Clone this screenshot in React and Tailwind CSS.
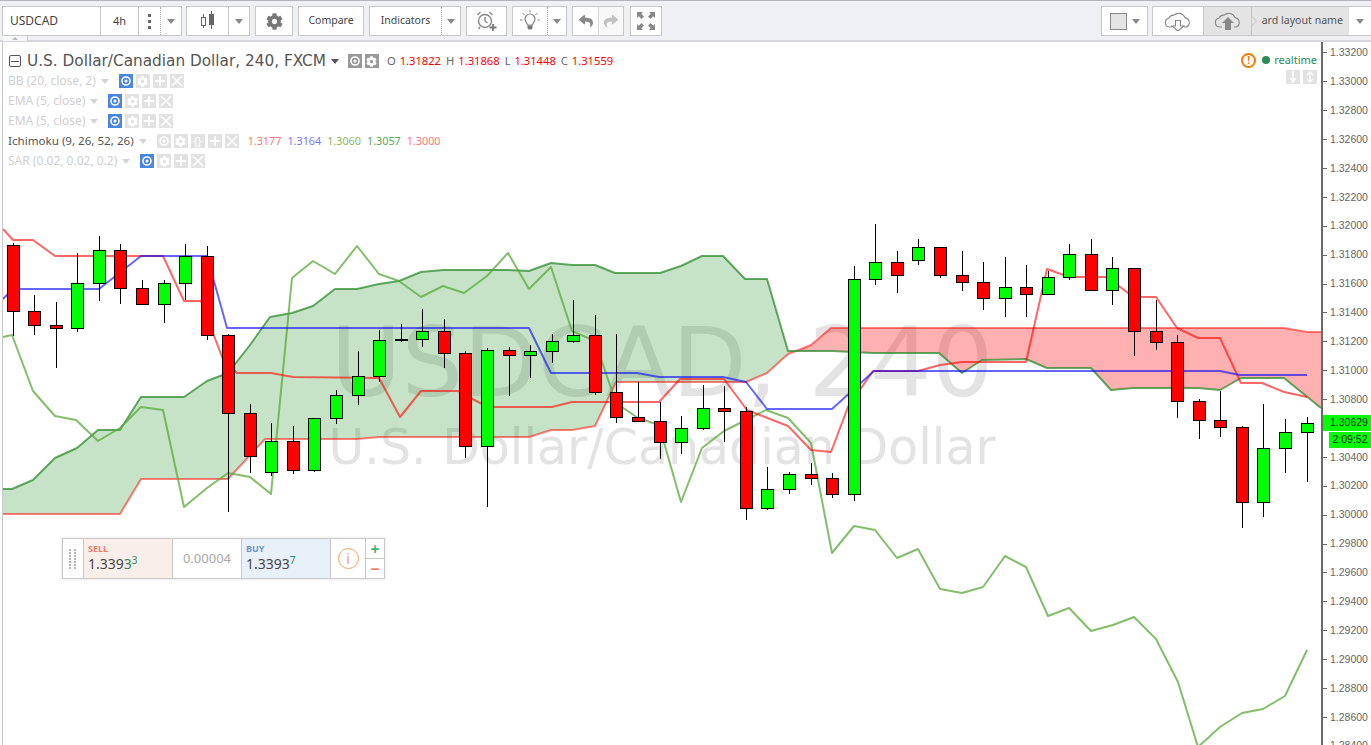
import { FaCog, FaReply, FaShare } from 'react-icons/fa'

// [x, wickTop, bodyTop, bodyBottom, wickBottom, colour]
const R = '#ff0000'
const G = '#00ff00'
const candles = [
  [13, 243, 245, 311, 335, R], [34, 295, 311, 325, 334, R], [56, 302, 325, 328, 367, R],
  [77, 253, 283, 328, 331, G], [99, 236, 250, 283, 300, G], [120, 244, 250, 288, 303, R],
  [142, 280, 288, 304, 304, R], [164, 280, 283, 304, 322, G], [185, 244, 256, 283, 299, G],
  [207, 246, 256, 335, 339, R], [228, 334, 335, 413, 511, R], [250, 404, 413, 456, 472, R],
  [271, 423, 441, 472, 475, G], [293, 426, 441, 470, 473, R], [314, 418, 418, 470, 471, G],
  [336, 390, 395, 418, 423, G], [358, 351, 376, 395, 404, G], [379, 330, 340, 376, 381, G],
  [401, 324, 339, 340, 341, '#000000'], [422, 309, 331, 339, 346, G], [444, 319, 331, 353, 367, R],
  [465, 351, 353, 446, 457, R], [487, 348, 350, 446, 506, G], [509, 347, 350, 355, 395, R],
  [530, 345, 351, 355, 377, G], [552, 334, 341, 351, 362, G], [573, 300, 335, 341, 342, G],
  [595, 315, 335, 392, 394, R], [616, 334, 392, 417, 422, R], [638, 382, 417, 421, 421, R],
  [660, 402, 421, 442, 458, R], [681, 416, 428, 442, 453, G], [703, 385, 408, 428, 429, G],
  [724, 386, 408, 411, 441, R], [746, 407, 411, 508, 519, R], [767, 467, 489, 508, 509, G],
  [789, 472, 474, 489, 493, G], [811, 463, 474, 478, 484, R], [832, 473, 478, 494, 497, R],
  [854, 266, 279, 494, 500, G], [875, 224, 262, 279, 284, G], [897, 251, 262, 275, 292, R],
  [918, 239, 247, 260, 264, G], [940, 247, 247, 275, 277, R], [962, 251, 275, 282, 290, R],
  [983, 262, 282, 298, 309, R], [1005, 257, 287, 298, 316, G], [1026, 265, 287, 294, 316, R],
  [1048, 271, 277, 294, 294, G], [1069, 244, 254, 277, 279, G], [1091, 239, 254, 290, 290, R],
  [1112, 257, 268, 290, 304, G], [1134, 268, 268, 331, 355, R], [1156, 300, 331, 342, 349, R],
  [1177, 335, 342, 401, 417, R], [1199, 399, 401, 420, 438, R], [1220, 391, 420, 427, 436, R],
  [1242, 426, 427, 502, 527, R], [1263, 404, 448, 502, 516, G], [1285, 419, 432, 448, 472, G],
  [1307, 417, 423, 432, 481, G],
]

const conversion = '3,229 13,240 33,240 55,256 163,256 184,301 201,301 222,357 237,373 271,373 293,377 379,378 400,417 421,391 458,391 480,403 493,407 552,407 572,402 659,402 680,379 724,379 747,410 788,426 811,450 831,452 848,407 873,371 918,371 940,365 962,362 1026,362 1047,269 1069,277 1107,277 1128,293 1140,297 1156,297 1177,328 1198,338 1220,338 1241,383 1262,383 1284,392 1307,397'
const base = '3,299 13,289 99,289 141,256 207,256 227,328 529,328 551,373 637,373 659,377 723,377 746,382 767,409 832,409 874,371 1220,371 1240,375 1307,375'
const lagging = '3,337 12,335 33,391 55,416 76,420 98,441 120,428 141,407 163,410 184,507 207,488 228,473 250,477 271,494 292,278 313,261 335,274 357,246 379,274 399,281 421,297 443,286 464,293 487,276 508,253 529,289 551,267 572,331 595,341 616,403 638,418 659,425 681,502 702,448 724,431 746,420 766,410 788,418 811,443 832,553 854,526 875,530 897,558 918,549 940,589 962,593 983,587 1005,556 1026,567 1048,616 1069,608 1091,631 1113,625 1134,617 1156,639 1178,682 1198,747 1220,727 1242,713 1263,709 1285,696 1307,650'
const spanAGreen = '3,489 12,489 33,480 55,458 77,448 98,430 120,430 141,397 184,397 207,381 228,373 250,345 270,317 292,313 313,306 335,289 357,289 379,284 399,281 421,272 443,270 508,270 529,271 551,263 572,265 595,265 615,273 660,273 681,266 702,256 723,256 745,279 767,279 788,351 796,351'
const spanARed = '796,351 833,351 873,353 939,353 962,373 982,360 1026,359 1047,368 1091,368 1111,390 1133,388 1198,388 1220,390 1241,378 1284,378 1321,408'
const spanBGreen = '796,351 788,354 767,373 746,382 616,382 595,426 572,430 551,430 529,437 379,437 357,439 265,439 228,479 141,479 120,514 3,514'
const spanBRed = '796,351 811,345 831,328 1284,328 1307,332 1321,332'

const ticks = ['1.33200', '1.33000', '1.32800', '1.32600', '1.32400', '1.32200', '1.32000', '1.31800', '1.31600', '1.31400', '1.31200', '1.31000', '1.30800', '', '1.30400', '1.30200', '1.30000', '1.29800', '1.29600', '1.29400', '1.29200', '1.29000', '1.28800', '1.28600', '1.28400']

function Caret({ className = 'border-t-[#8a8a8a]' }) {
  return <span className={`inline-block w-0 h-0 border-x-[4px] border-x-transparent border-t-[5px] ${className}`} />
}

function CaretCell({ className }) {
  return (
    <div className={`flex items-center justify-center border-l border-dotted border-[#aaaaaa] ${className}`}>
      <Caret />
    </div>
  )
}

function Box({ className = '', children }) {
  return <div className={`flex h-[30px] shrink-0 border border-[#c6c8ca] bg-white text-[#444] ${className}`}>{children}</div>
}

function CandleIcon() {
  return (
    <svg width="16" height="20" viewBox="0 0 16 20">
      <path d="M3.5 3v14" stroke="#666" />
      <rect x="1.5" y="6.5" width="4" height="8" fill="#fff" stroke="#666" />
      <path d="M11.5 0v18" stroke="#666" />
      <rect x="9" y="3" width="5" height="11" fill="#666" />
    </svg>
  )
}

function AlarmIcon() {
  return (
    <svg width="22" height="22" viewBox="0 0 22 22" fill="none" stroke="#888" strokeWidth="1.4">
      <circle cx="9" cy="11" r="6.5" />
      <path d="M9 7v4l2.5 2M1.5 5l3-3M13.5 2l3 3M4 17l-1.5 2" />
      <path d="M17 14v7M13.5 17.5h7" stroke="#777" strokeWidth="1.8" />
    </svg>
  )
}

function BulbIcon() {
  return (
    <svg width="20" height="22" viewBox="0 0 20 22" fill="none" stroke="#888">
      <path d="M10 0v2.5M2.5 3l2 2M17.5 3l-2 2M0 10h2.5M17.5 10H20" />
      <path d="M7.5 15c0-2-2.5-3-2.500-6a5 5 0 0 1 10 0c0 3-2.500 4-2.500 6z" strokeWidth="1.2" />
      <path d="M7.500 15.500h5V18l-1 1.500h-3l-1-1.500z" fill="#777" stroke="none" />
    </svg>
  )
}

function FullscreenIcon() {
  return (
    <svg width="18" height="18" viewBox="0 0 18 18" fill="#888">
      <path d="M0 0h6L4.300 1.700 7 4.500 4.500 7 1.700 4.300 0 6z" />
      <path d="M18 0h-6l1.700 1.700L11 4.500 13.500 7l2.800-2.700L18 6z" />
      <path d="M0 18v-6l1.700 1.700L4.500 11 7 13.500l-2.700 2.800L6 18z" />
      <path d="M18 18h-6l1.700-1.700L11 13.500 13.500 11l2.800 2.700L18 12z" />
    </svg>
  )
}

function CloudIcon({ up }) {
  return (
    <svg width="28" height="20" viewBox="0 0 28 20" fill="none" stroke="#888" strokeWidth="1.1">
      <path d="M8 16H5.500a4.500 4.500 0 0 1-.5-8.900 5 5 0 0 1 5-3 7 7 0 0 1 11 2.500 5 5 0 0 1 1.500 9.400H20" />
      {up
        ? <path d="M14 6l-6 6h3v7h6v-7h3z" fill="#888" stroke="none" />
        : <path d="M11.500 9.500h5V15H20l-6 5-6-5h3.500z" fill="#fff" />}
    </svg>
  )
}

function MiniIcon({ type, active, dark }) {
  const bg = active ? 'bg-[#4a86dc]' : dark ? 'bg-[#999999]' : 'bg-[#e2e2e2]'
  return (
    <span className={`flex items-center justify-center w-[14px] h-[14px] shrink-0 text-white ${bg}`}>
      {type === 'eye' && (
        <svg width="12" height="12" viewBox="0 0 12 12">
          <circle cx="6" cy="6" r="4" fill="none" stroke="#fff" strokeWidth="1.600" />
          <circle cx="6" cy="6" r="1.500" fill="#fff" />
        </svg>
      )}
      {type === 'gear' && <FaCog size={11} />}
      {type === 'plus' && (
        <svg width="10" height="10" viewBox="0 0 10 10"><path d="M5 0v10M0 5h10" stroke="#fff" strokeWidth="2" /></svg>
      )}
      {type === 'x' && (
        <svg width="12" height="12" viewBox="0 0 12 12"><path d="M1 1l10 10M11 1L1 11" stroke="#fff" strokeWidth="1.500" /></svg>
      )}
      {type === 'code' && <span className="text-[10px] leading-none">{'{}'}</span>}
      {type === 'down' && (
        <svg width="8" height="12" viewBox="0 0 8 12"><path d="M4 0v9M1 7l3 4 3-4" fill="none" stroke="#fff" strokeWidth="1.500" /></svg>
      )}
      {type === 'updown' && (
        <svg width="8" height="12" viewBox="0 0 8 12"><path d="M4 1v10M1 4l3-3 3 3M1 8l3 3 3-3" fill="none" stroke="#fff" strokeWidth="1.300" /></svg>
      )}
    </span>
  )
}

function Study({ label, active, icons = ['gear', 'plus', 'x'], dim = true, children }) {
  return (
    <div className="flex items-center h-[20px]">
      <span className={`whitespace-nowrap ${dim ? 'text-[12px] text-[#cfcfcf]' : 'text-[11.6px] text-[#555555]'}`}>{label}</span>
      <span className="ml-[5px] flex"><Caret className="border-t-[#d4d4d4]" /></span>
      <span className="ml-[10px] flex gap-[3px]">
        <MiniIcon type="eye" active={active} />
        {icons.map((t) => <MiniIcon key={t} type={t} />)}
      </span>
      {children}
    </div>
  )
}

function Chart() {
  return (
    <svg className="absolute inset-0 w-full h-full" viewBox="3 42 1318 703">
      <polygon points={`${spanAGreen} ${spanBGreen}`} fill="#008000" fillOpacity="0.22" />
      <polygon points={`${spanARed} ${spanBRed.split(' ').reverse().join(' ')}`} fill="#ff0000" fillOpacity="0.31" />
      <g fill="none" strokeWidth="2" strokeLinejoin="round">
        <polyline points={spanBGreen.split(' ').reverse().join(' ')} stroke="#ff0000" strokeOpacity="0.5" />
        <polyline points={spanBRed} stroke="#ff0000" strokeOpacity="0.5" />
        <polyline points={`${spanAGreen} ${spanARed}`} stroke="#2e8b2e" strokeOpacity="0.75" />
        <polyline points={lagging} stroke="#5aa83a" strokeOpacity="0.75" />
        <polyline points={conversion} stroke="#ff0000" strokeOpacity="0.6" />
        <polyline points={base} stroke="#0000ff" strokeOpacity="0.6" />
      </g>
      {candles.map(([x, wt, t, b, wb, c]) => (
        <g key={x}>
          <path d={`M${x + 0.5} ${wt}V${wb + 1}`} stroke="#000" />
          <rect x={x - 5.5} y={t + 0.5} width="12" height={b - t} fill={c} stroke="#000" />
        </g>
      ))}
    </svg>
  )
}

function TradePanel() {
  return (
    <div className="absolute left-[59px] top-[496px] flex w-[323px] h-[41px] border border-[#c8c8c8] bg-white shadow-[0_0_3px_rgba(0,0,0,0.12)] text-[#444]">
      <div className="w-[21px] grid grid-cols-2 gap-x-[2px] gap-y-[1px] content-center justify-center px-[6px] border-r border-[#c8c8c8]">
        {Array.from({ length: 14 }, (_, i) => <span key={i} className="w-[2px] h-[2px] bg-[#b5b5b5]" />)}
      </div>
      <div className="w-[89px] bg-[#faeeea] border-r border-[#c8c8c8] pl-[4px] pt-[4px]">
        <div className="text-[9px] leading-[11px] font-bold text-[#e8806a]">SELL</div>
        <div className="text-[14px] leading-[15px] mt-[2px]">1.339<span className="text-[#2e8b57]">3</span><sup className="text-[10px] text-[#2e8b57] leading-none">3</sup></div>
      </div>
      <div className="w-[69px] flex items-center justify-center text-[13px] text-[#a8a8a8] border-r border-[#c8c8c8]">0.00004</div>
      <div className="w-[89px] bg-[#e8f0fa] border-r border-[#c8c8c8] pl-[4px] pt-[4px]">
        <div className="text-[9px] leading-[11px] font-bold text-[#6d94c8]">BUY</div>
        <div className="text-[14px] leading-[15px] mt-[2px]">1.3393<sup className="text-[10px] text-[#2e8b57] leading-none">7</sup></div>
      </div>
      <div className="w-[35px] flex items-center justify-center border-r border-[#c8c8c8]">
        <span className="flex items-center justify-center w-[21px] h-[21px] rounded-full border border-[#f5a25d] text-[14px] text-[#f5a25d]">i</span>
      </div>
      <div className="flex-1 flex flex-col">
        <div className="flex-1 flex items-center justify-center text-[16px] font-bold leading-none text-[#4caf6e] border-b border-[#c8c8c8]">+</div>
        <div className="flex-1 flex items-center justify-center text-[16px] font-bold leading-none text-[#e8806a]">−</div>
      </div>
    </div>
  )
}

export default function App() {
  return (
    <div className="w-full h-[745px] overflow-hidden flex flex-col bg-white font-['Noto_Sans',sans-serif]">
      <div className="relative h-[42px] shrink-0 flex items-start gap-[5px] pl-[2px] pt-[5px] bg-[#eff0f4] border-t border-t-[#b4b4bc] border-b-2 border-b-[#d4d6d9]">
        <Box className="w-[180px] -mr-[1px]">
          <div className="w-[98px] flex items-center pl-[7px] text-[12px] border-r border-[#c6c8ca]">USDCAD</div>
          <div className="w-[38px] flex items-center justify-center text-[11px] border-r border-[#c6c8ca]">4h</div>
          <div className="w-[21px] flex flex-col items-center justify-center gap-[3px]">
            <span className="w-[3px] h-[3px] bg-[#666]" /><span className="w-[3px] h-[3px] bg-[#666]" /><span className="w-[3px] h-[3px] bg-[#666]" />
          </div>
          <CaretCell className="flex-1" />
        </Box>
        <Box className="w-[64px]">
          <div className="w-[42px] flex items-center justify-center border-r border-[#c6c8ca]"><CandleIcon /></div>
          <div className="flex-1 flex items-center justify-center"><Caret /></div>
        </Box>
        <Box className="w-[38px] items-center justify-center text-[#777]"><FaCog size={17} /></Box>
        <Box className="w-[66px] items-center justify-center text-[10.5px]">Compare</Box>
        <Box className="w-[92px]">
          <div className="w-[71px] flex items-center justify-center text-[10.5px]">Indicators</div>
          <CaretCell className="flex-1" />
        </Box>
        <Box className="w-[41px] items-center justify-center"><AlarmIcon /></Box>
        <Box className="w-[55px]">
          <div className="w-[34px] flex items-center justify-center"><BulbIcon /></div>
          <CaretCell className="flex-1" />
        </Box>
        <Box className="w-[52px]">
          <div className="w-[26px] flex items-center justify-center text-[#888] border-r border-[#d8dadc]"><FaReply size={14} /></div>
          <div className="flex-1 flex items-center justify-center text-[#c0c0c0] bg-[#f8f8f8]"><FaShare size={14} /></div>
        </Box>
        <Box className="w-[32px] ml-[1px] items-center justify-center"><FullscreenIcon /></Box>
        <Box className="ml-auto w-[47px] items-center justify-center gap-[5px]">
          <span className="w-[17px] h-[17px] bg-[#e4e4e4] border border-[#888]" />
          <Caret />
        </Box>
        <Box className="w-[219px] -ml-px border-r-0">
          <div className="w-[51px] flex items-center justify-center border-r border-[#c6c8ca]"><CloudIcon /></div>
          <div className="w-[47px] flex items-center justify-center bg-[#e4e4e4]"><CloudIcon up /></div>
          <div className="relative w-[98px] flex items-center justify-end pr-[6px] bg-[#e4e4e4] border-l border-[#c6c8ca] text-[10.6px] text-[#555] whitespace-nowrap">
            <svg className="absolute -left-px top-0" width="7" height="28" viewBox="0 0 7 28" fill="none" stroke="#c0c2c4">
              <path d="M0.500 0v9l5 5-5 5v9" />
            </svg>
            ard layout name
          </div>
          <div className="flex-1 flex items-center justify-center"><Caret /></div>
        </Box>
        <div className="absolute left-[3px] top-[35px] w-[25px] h-[5px] flex justify-center border-r border-[#c6c8ca] bg-[#f6f6f8]">
          <span className="w-0 h-0 mt-[1px] border-x-[3px] border-x-transparent border-b-[3px] border-b-[#bbbbbb]" />
        </div>
      </div>

      <div className="flex-1 flex min-h-0">
        <div className="relative ml-[2px] w-[1319px] shrink-0 overflow-hidden border-l border-[#c8c8d0]">
          <div className="absolute left-0 right-0 top-[265px] flex flex-col items-center text-[#e3e3e3] whitespace-nowrap font-['DejaVu_Sans',sans-serif]">
            <div className="text-[97px] leading-[112px]">USDCAD, 240</div>
            <div className="text-[49px] leading-[56px] mt-[1px]">U.S. Dollar/Canadian Dollar</div>
          </div>
          <Chart />

          <div className="absolute left-[5px] top-[9px] flex flex-col">
            <div className="flex items-center h-[20px]">
              <span className="flex items-center justify-center w-[12px] h-[12px] ml-[1px] border border-[#555] rounded-[2px]"><span className="w-[8px] h-px bg-[#555]" /></span>
              <span className="ml-[6px] text-[15.3px] text-[#555] whitespace-nowrap font-['DejaVu_Sans',sans-serif]">U.S. Dollar/Canadian Dollar, 240, FXCM</span>
              <span className="ml-[5px] flex"><Caret className="border-t-[#555]" /></span>
              <span className="ml-[9px] flex gap-[3px]"><MiniIcon type="eye" dark /><MiniIcon type="gear" dark /></span>
              <span className="ml-[8px] flex gap-[5px] text-[11.2px] text-[#666] whitespace-nowrap">
                <span>O <span className="ml-[1px] text-[#ff0000]">1.31822</span></span>
                <span>H <span className="ml-[1px] text-[#ff0000]">1.31868</span></span>
                <span>L <span className="ml-[1px] text-[#ff0000]">1.31448</span></span>
                <span>C <span className="ml-[1px] text-[#ff0000]">1.31559</span></span>
              </span>
            </div>
            <Study label="BB (20, close, 2)" active />
            <Study label="EMA (5, close)" active />
            <Study label="EMA (5, close)" active />
            <Study label="Ichimoku (9, 26, 52, 26)" icons={['gear', 'code', 'plus', 'x']} dim={false}>
              <span className="ml-[9px] flex gap-[6px] text-[10.8px] whitespace-nowrap">
                <span className="text-[#ff7777]">1.3177</span>
                <span className="text-[#7777ff]">1.3164</span>
                <span className="text-[#88bb66]">1.3060</span>
                <span className="text-[#55aa55]">1.3057</span>
                <span className="text-[#ff7777]">1.3000</span>
              </span>
            </Study>
            <Study label="SAR (0.02, 0.02, 0.2)" active />
          </div>

          <div className="absolute right-[4px] top-[10px] flex flex-col items-end gap-[2px]">
            <div className="flex items-center h-[16px]">
              <span className="flex items-center justify-center w-[15px] h-[15px] rounded-full border-2 border-[#f57c00] text-[10px] font-bold leading-none text-[#f57c00]">!</span>
              <span className="ml-[6px] w-[8px] h-[8px] rounded-full bg-[#2e8b57]" />
              <span className="ml-[4px] text-[11px] text-[#2e8b57]">realtime</span>
            </div>
            <div className="flex gap-[3px]"><MiniIcon type="down" /><MiniIcon type="updown" /></div>
          </div>

          <TradePanel />
        </div>

        <div className="relative flex-1 overflow-hidden border-l-2 border-[#6a6a6a] font-['Liberation_Sans',sans-serif] text-[10.5px] text-[#666]">
          <div className="flex flex-col -mt-[3.5px]">
            {ticks.map((t, i) => (
              <div key={i} className="flex items-center h-[28.9px] shrink-0">
                <span className="w-[4px] h-px bg-[#666]" />
                <span className="ml-[3px]">{t}</span>
              </div>
            ))}
          </div>
          <div className="absolute left-0 right-0 top-[373px] h-[16px] flex items-center pl-[7px] bg-[#00ff00] text-[#222]">1.30629</div>
          <div className="absolute left-[6px] right-0 top-[390px] h-[16px] flex items-center justify-center bg-[#00ff00] text-[#222]">2:09:52</div>
        </div>
      </div>
    </div>
  )
}
